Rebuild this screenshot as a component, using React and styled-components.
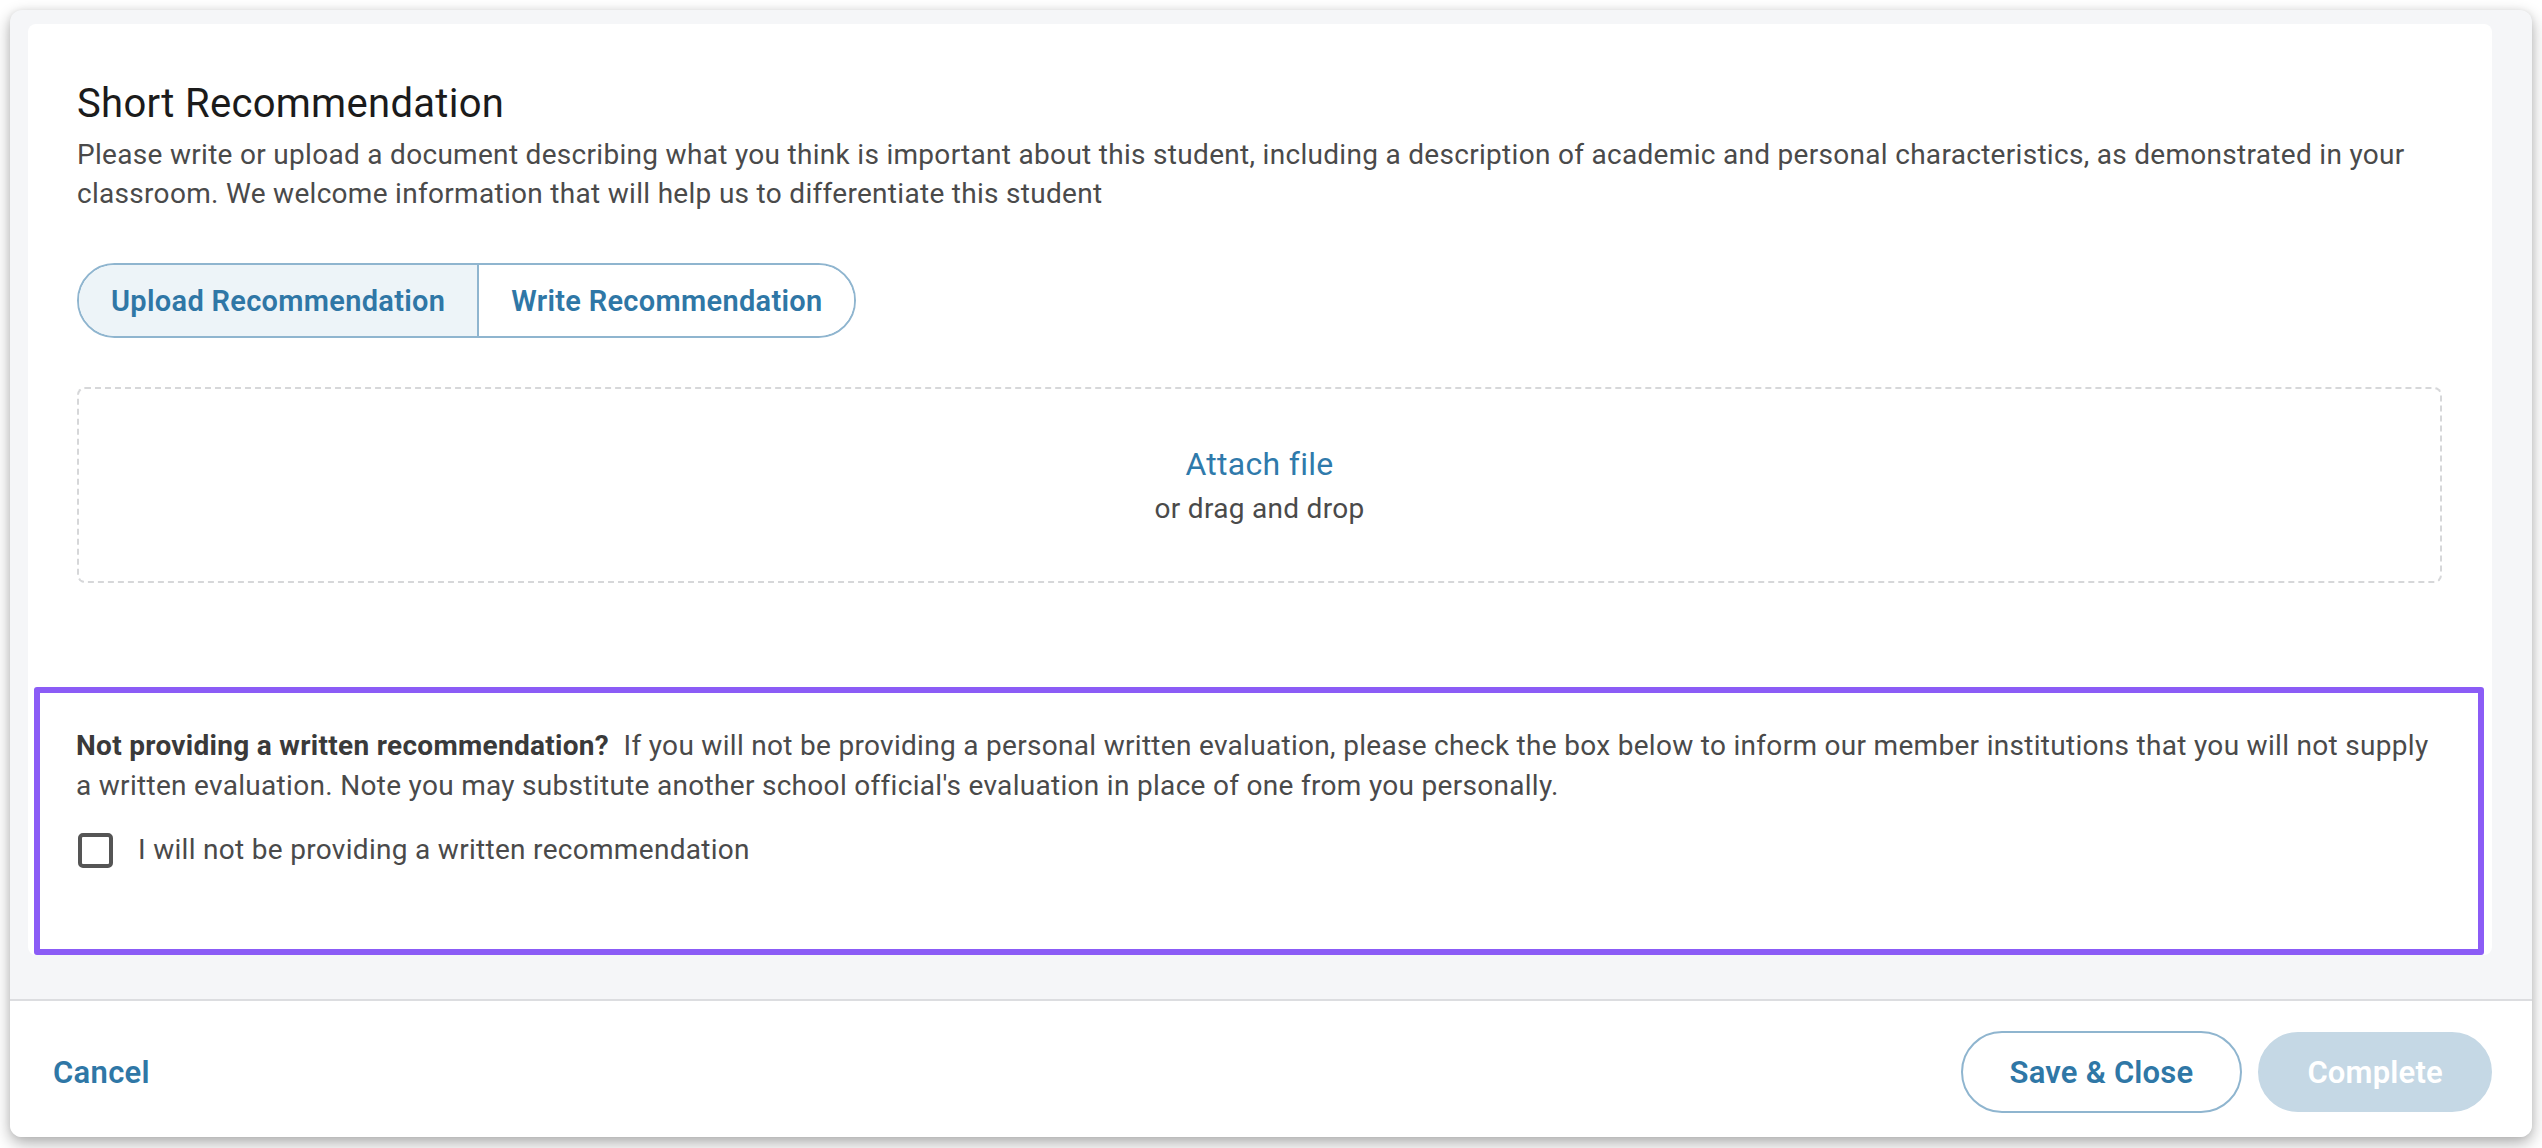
import React from "react";
import styled, { createGlobalStyle } from "styled-components";

const GlobalStyle = createGlobalStyle`
  * {
    box-sizing: border-box;
  }
  html,
  body {
    margin: 0;
    padding: 0;
    background: #ffffff;
    font-family: Roboto, "Liberation Sans", Arial, sans-serif;
  }
`;

function App() {
  return (
    <>
      <GlobalStyle />
      <Page>
        <Modal>
          <Body>
            <Card>
              <Intro>
                <Title>Short Recommendation</Title>
                <Description>
                  Please write or upload a document describing what you think is
                  important about this student, including a description of
                  academic and personal characteristics, as demonstrated in your
                  classroom. We welcome information that will help us to
                  differentiate this student
                </Description>
                <Toggle>
                  <ToggleButton active>Upload Recommendation</ToggleButton>
                  <ToggleButton>Write Recommendation</ToggleButton>
                </Toggle>
                <DropZone>
                  <AttachLink>Attach file</AttachLink>
                  <DropHint>or drag and drop</DropHint>
                </DropZone>
              </Intro>
              <Highlight>
                <Notice>
                  <strong>Not providing a written recommendation?</strong>
                  &nbsp; If you will not be providing a personal written
                  evaluation, please check the box below to inform our member
                  institutions that you will not supply a written evaluation.
                  Note you may substitute another school official's evaluation
                  in place of one from you personally.
                </Notice>
                <CheckRow>
                  <CheckBox type="checkbox" />
                  <span>I will not be providing a written recommendation</span>
                </CheckRow>
              </Highlight>
            </Card>
          </Body>
          <Footer>
            <CancelButton>Cancel</CancelButton>
            <Actions>
              <PillButton>Save &amp; Close</PillButton>
              <PillButton primary disabled>
                Complete
              </PillButton>
            </Actions>
          </Footer>
        </Modal>
      </Page>
    </>
  );
}

const Page = styled.div`
  height: 1148px;
  padding: 10px 10px 11px 10px;
`;

const Modal = styled.div`
  height: 100%;
  display: flex;
  flex-direction: column;
  border-radius: 12px;
  overflow: hidden;
  background: #f5f6f8;
  box-shadow: 0 6px 16px rgba(0, 0, 0, 0.32), 0 0 6px rgba(0, 0, 0, 0.06);
`;

const Body = styled.div`
  flex: 1;
  padding: 14px 40px 0 18px;
`;

const Card = styled.div`
  background: #ffffff;
  border-radius: 8px;
  padding-top: 56px;
`;

const Intro = styled.div`
  padding: 0 50px 0 49px;
`;

const Title = styled.h2`
  margin: 0;
  font-size: 40px;
  line-height: 48px;
  font-weight: 400;
  letter-spacing: 0.3px;
  color: #1b1b1b;
`;

const Description = styled.p`
  margin: 7px 0 0;
  font-size: 28px;
  line-height: 39.2px;
  letter-spacing: 0.3px;
  color: #4a4a4a;
`;

const Toggle = styled.div`
  display: inline-flex;
  margin-top: 50px;
  border: 2px solid #8fb5cf;
  border-radius: 40px;
  overflow: hidden;
`;

const ToggleButton = styled.button`
  height: 71px;
  padding: 0 32px;
  border: none;
  background: ${(p) => (p.active ? "#edf4f8" : "#ffffff")};
  color: #2f77a6;
  font-family: inherit;
  font-size: 29px;
  font-weight: 600;
  letter-spacing: 0.3px;
  cursor: pointer;

  & + & {
    border-left: 2px solid #8fb5cf;
  }
`;

const DropZone = styled.div`
  margin-top: 49px;
  height: 196px;
  border: 2px dashed #d6d7d9;
  border-radius: 8px;
  display: flex;
  flex-direction: column;
  align-items: center;
  justify-content: center;
`;

const AttachLink = styled.span`
  font-size: 32px;
  line-height: 44.8px;
  letter-spacing: 0.3px;
  color: #2f7aab;
  cursor: pointer;
`;

const DropHint = styled.span`
  margin-top: 2px;
  font-size: 28px;
  line-height: 39.2px;
  letter-spacing: 0.3px;
  color: #4a4a4a;
`;

const Highlight = styled.section`
  margin: 104px 8px -11px 6px;
  border: 6px solid #8b5cf6;
  border-radius: 3px;
  background: #ffffff;
  padding: 33px 37px 79px 36px;
`;

const Notice = styled.p`
  margin: 0;
  font-size: 28px;
  line-height: 40px;
  letter-spacing: 0.3px;
  color: #4a4a4a;

  strong {
    font-weight: 700;
    color: #3a3a3a;
  }
`;

const CheckRow = styled.label`
  display: flex;
  align-items: center;
  gap: 25px;
  margin-top: 24px;
  font-size: 28px;
  line-height: 40px;
  letter-spacing: 0.3px;
  color: #4a4a4a;
`;

const CheckBox = styled.input`
  appearance: none;
  margin: 0 0 0 2px;
  width: 35px;
  height: 35px;
  border: 4px solid #555555;
  border-radius: 5px;
  background: #ffffff;
`;

const Footer = styled.div`
  height: 138px;
  background: #ffffff;
  border-top: 2px solid #dcdde0;
  padding: 30px 40px 24px 43px;
  display: flex;
  align-items: center;
  justify-content: space-between;
`;

const CancelButton = styled.button`
  border: none;
  background: none;
  padding: 0;
  font-family: inherit;
  font-size: 31px;
  font-weight: 600;
  letter-spacing: 0.3px;
  color: #2f77a6;
  cursor: pointer;
`;

const Actions = styled.div`
  display: flex;
  align-items: center;
  gap: 16px;
`;

const PillButton = styled.button`
  height: ${(p) => (p.primary ? "80px" : "82px")};
  padding: 0 47px;
  border-radius: 41px;
  border: 2px solid ${(p) => (p.primary ? "#c5d8e5" : "#8fb5cf")};
  background: ${(p) => (p.primary ? "#c5d8e5" : "#ffffff")};
  color: ${(p) => (p.primary ? "#ffffff" : "#2f77a6")};
  font-family: inherit;
  font-size: 31px;
  font-weight: 600;
  letter-spacing: 0.2px;
  cursor: pointer;
`;

export default App;
